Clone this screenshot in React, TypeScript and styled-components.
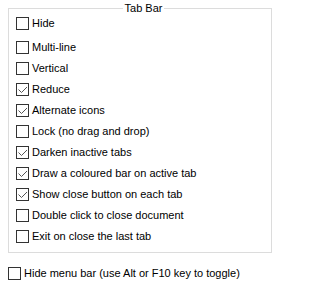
import React from "react";
import styled, { createGlobalStyle } from "styled-components";

const Global = createGlobalStyle`
  html, body { margin: 0; padding: 0; background: #ffffff; }
  body { font-family: "Liberation Sans", Arial, sans-serif; font-size: 11px; color: #000; }
`;

const Page = styled.div`
  width: 296px;
  height: 299px;
  box-sizing: border-box;
  padding: 2px 0 0 8px;
  display: flex;
  flex-direction: column;
`;

const Group = styled.fieldset`
  margin: 0;
  width: 264px;
  box-sizing: border-box;
  min-width: 0;
  border: 1px solid #dcdcdc;
  padding: 2px 0 9px 7px;
`;

const Legend = styled.legend`
  margin: 0 auto;
  padding: 0 2px;
  line-height: 13px;
  height: 13px;
  color: #000;
`;

const List = styled.div`
  display: flex;
  flex-direction: column;
  gap: 8px;
`;

const Row = styled.label<{ $extra?: number }>`
  display: flex;
  align-items: center;
  gap: 3px;
  height: 13px;
  line-height: 13px;
  white-space: nowrap;
  margin-bottom: ${(p) => p.$extra ?? 0}px;
`;

const Box = styled.span`
  width: 13px;
  height: 13px;
  box-sizing: border-box;
  border: 1px solid #333333;
  background: #ffffff;
  display: flex;
  flex: none;
`;

const Outer = styled.div`
  margin-top: 14px;
`;

const Check = () => (
  <svg width="11" height="11" viewBox="0 0 11 11">
    <polyline points="1.5,5.5 4.5,8.5 10,3" fill="none" stroke="#555" strokeWidth="1" />
  </svg>
);

const CheckBox = ({ label, checked, extra }: { label: string; checked?: boolean; extra?: number }) => (
  <Row $extra={extra}>
    <Box>{checked ? <Check /> : null}</Box>
    <span>{label}</span>
  </Row>
);

const items: [string, boolean][] = [
  ["Multi-line", false],
  ["Vertical", false],
  ["Reduce", true],
  ["Alternate icons", true],
  ["Lock (no drag and drop)", false],
  ["Darken inactive tabs", true],
  ["Draw a coloured bar on active tab", true],
  ["Show close button on each tab", true],
  ["Double click to close document", false],
  ["Exit on close the last tab", false],
];

export default function App() {
  return (
    <>
      <Global />
      <Page>
        <Group>
          <Legend>Tab Bar</Legend>
          <List>
            <CheckBox label="Hide" extra={3} />
            {items.map(([l, c]) => (
              <CheckBox key={l} label={l} checked={c} />
            ))}
          </List>
        </Group>
        <Outer>
          <CheckBox label="Hide menu bar (use Alt or F10 key to toggle)" />
        </Outer>
      </Page>
    </>
  );
}
